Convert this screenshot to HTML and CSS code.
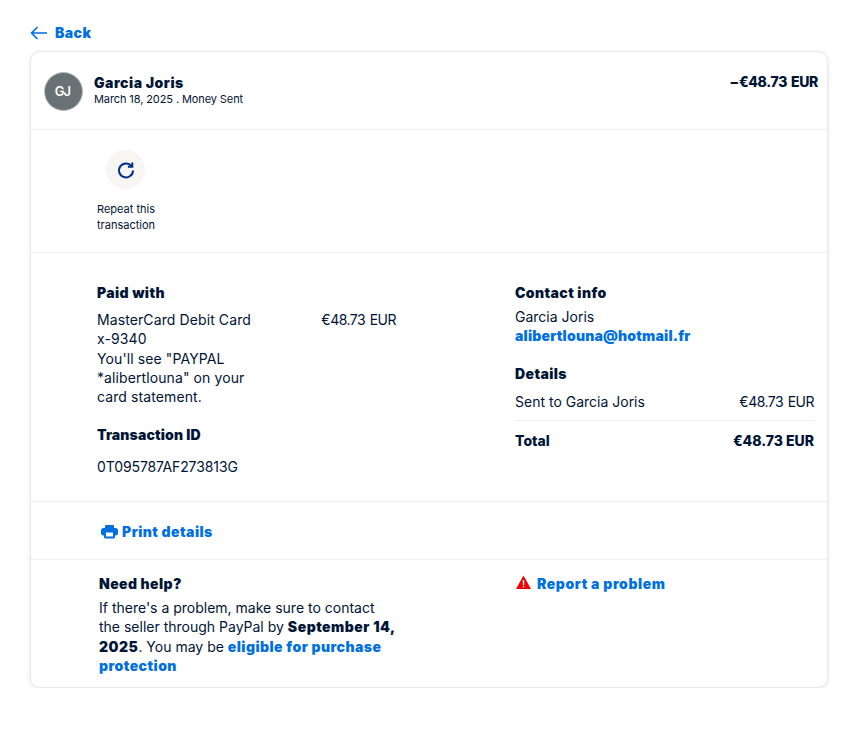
FILE: index.html
```html
<!DOCTYPE html>
<html lang="en">
<head>
    <meta charset="UTF-8">
    <meta name="viewport" content="width=device-width, initial-scale=1.0">
    <title>Transaction details</title>
    <link rel="stylesheet" href="styles.css">
</head>
<body>
    <a class="back link" href="#">
        <svg class="back-icon" width="18" height="14" viewBox="0 0 18 14" fill="none" stroke="#0070e0" stroke-width="1.6">
            <path d="M17 7H1.500M7.500 1L1.500 7l6 6"/>
        </svg>
        Back
    </a>

    <div class="card">
        <!-- Header -->
        <div class="header">
            <div class="avatar">GJ</div>
            <div class="header-name">
                <div class="name">Garcia Joris</div>
                <div class="date">March 18, 2025 . Money Sent</div>
            </div>
            <div class="amount">−€48.73 EUR</div>
        </div>

        <!-- Repeat -->
        <div class="actions">
            <div class="repeat-circle">
                <svg width="20" height="20" viewBox="0 0 20 20" fill="none" stroke="#003087" stroke-width="2">
                    <path d="M15.600 6.200A7 7 0 1 0 17 10.400"/>
                    <path d="M16.300 2.400v4.400h-4.400"/>
                </svg>
            </div>
            <div class="repeat-label">Repeat this<br>transaction</div>
        </div>

        <!-- Details -->
        <div class="details">
            <div class="col-left">
                <h3 class="title">Paid with</h3>
                <div class="paid-row">
                    <div class="paid-text">MasterCard Debit Card<br>x-9340<br>You'll see "PAYPAL *alibertlouna" on your card statement.</div>
                    <div class="paid-amount">€48.73 EUR</div>
                </div>
                <h3 class="title txn-title">Transaction ID</h3>
                <div class="txn-id">0T095787AF273813G</div>
            </div>
            <div class="col-right">
                <h3 class="title">Contact info</h3>
                <div class="contact">Garcia Joris<br><a class="link email" href="#">alibertlouna@hotmail.fr</a></div>
                <h3 class="title details-title">Details</h3>
                <div class="line sent"><span>Sent to Garcia Joris</span><span class="price">€48.73 EUR</span></div>
                <div class="line total"><span>Total</span><span>€48.73 EUR</span></div>
            </div>
        </div>

        <!-- Print -->
        <div class="print">
            <a class="link print-link" href="#">
                <svg width="17" height="14" viewBox="0 0 17 14" fill="#0070e0">
                    <rect x="4" y="0" width="9" height="4" rx="1"/>
                    <rect x="0" y="3" width="17" height="7.500" rx="2.500"/>
                    <rect x="3" y="6" width="11" height="7.500" rx="1.500"/>
                    <rect x="5" y="7.500" width="7" height="4" fill="#fff"/>
                </svg>
                Print details
            </a>
        </div>

        <!-- Help -->
        <div class="help">
            <div class="help-left">
                <h3 class="title help-title">Need help?</h3>
                <p>If there's a problem, make sure to contact the seller through PayPal by <b>September 14, 2025</b>. You may be <a class="link" href="#">eligible for purchase protection</a></p>
            </div>
            <a class="link report" href="#">
                <svg width="15" height="14" viewBox="0 0 15 14">
                    <path d="M7.500 0.500L15 14H0z" fill="#f00000"/>
                    <path d="M6.800 5h1.400v5H6.800zM6.800 11h1.400v1.400H6.800z" fill="#fff"/>
                </svg>
                Report a problem
            </a>
        </div>
    </div>
</body>
</html>
```

FILE: styles.css
```css
body {
    font-family: Inter, "Noto Sans", sans-serif;
    font-size: 14px;
    line-height: 19.3px;
    margin: 0;
    padding: 23px 30px 0;
    background-color: #fff;
    color: #001435;
}
.link {
    color: #0070e0;
    font-weight: 900;
    letter-spacing: 0.45px;
    text-decoration: none;
}
.title {
    font-size: 14px;
    line-height: 19px;
    font-weight: 900;
    letter-spacing: 0.4px;
    margin: 0;
    color: #001435;
}
.back {
    display: flex;
    align-items: center;
    gap: 7px;
    height: 19px;
    margin-bottom: 10px;
}
.card {
    width: 798px;
    height: 637px;
    box-sizing: border-box;
    margin-top: -1px;
    border: 1px solid #e9e9e9;
    border-radius: 10px;
    box-shadow: 0 1px 4px rgba(0, 0, 0, 0.1);
    background: #fff;
}
.header {
    display: flex;
    align-items: flex-start;
    height: 78px;
    padding: 20px 9px 0 13px;
    box-sizing: border-box;
    border-bottom: 1px solid #f0efec;
}
.avatar {
    width: 37px;
    height: 37px;
    box-sizing: content-box;
    border-radius: 50%;
    background: #687173;
    border: 1px solid #b9bcbd;
    color: #fff;
    font-weight: 600;
    font-size: 13px;
    letter-spacing: -1px;
    line-height: 36px;
    text-align: center;
    flex-shrink: 0;
    text-indent: -2px;
}
.header-name {
    margin-left: 11px;
    flex: 1;
    margin-top: 1px;
}
.name {
    font-weight: 900;
    letter-spacing: 0.5px;
    line-height: 19px;
}
.date {
    font-size: 11px;
    letter-spacing: -0.1px;
    line-height: 15px;
}
.amount {
    font-weight: 800;
    letter-spacing: -0.3px;
    word-spacing: 1px;
}
.actions {
    height: 123px;
    box-sizing: border-box;
    padding: 20px 0 0 66px;
    border-bottom: 1px solid #f0efec;
}
.repeat-circle {
    width: 39px;
    height: 39px;
    margin-left: 9px;
    border-radius: 50%;
    background: #f8f6f3;
    display: flex;
    align-items: center;
    justify-content: center;
}
.repeat-label {
    font-size: 11px;
    line-height: 16px;
    margin-top: 12px;
}
.details {
    display: flex;
    height: 249px;
    box-sizing: border-box;
    padding: 30px 13px 0 66px;
    border-bottom: 1px solid #f0efec;
}
.col-left {
    width: 299px;
}
.col-right {
    width: 299px;
    margin-left: 119px;
}
.paid-row {
    display: flex;
    justify-content: space-between;
    margin-top: 8px;
}
.paid-text {
    width: 160px;
    letter-spacing: 0.1px;
}
.paid-amount,
.price {
    letter-spacing: -0.5px;
    word-spacing: 1px;
}
.txn-title {
    margin-top: 19px;
    letter-spacing: 0.15px;
}
.txn-id {
    margin-top: 13px;
    letter-spacing: -0.1px;
}
.contact {
    margin-top: 5px;
}
.email {
    letter-spacing: 0.2px;
}
.details-title {
    margin-top: 18px;
}
.line {
    display: flex;
    justify-content: space-between;
}
.sent {
    margin-top: 9px;
    padding-bottom: 9px;
    border-bottom: 1px solid #eeeeee;
}
.total {
    font-weight: 800;
    margin-top: 10px;
}
.print {
    height: 58px;
    box-sizing: border-box;
    padding: 20px 0 0 70px;
    border-bottom: 1px solid #f0efec;
}
.print-link {
    display: flex;
    align-items: center;
    gap: 4px;
}
.help {
    display: flex;
    padding: 14px 0 0 68px;
}
.help-left {
    width: 300px;
}
.help-left p {
    margin: 5px 0 0;
    line-height: 19.4px;
}
.help-left b {
    font-weight: 900;
    letter-spacing: 0.5px;
}
.report {
    display: flex;
    align-items: flex-start;
    gap: 6px;
    margin-left: 117px;
    letter-spacing: 0.55px;
}
.report svg {
    margin-top: 1px;
}
```
